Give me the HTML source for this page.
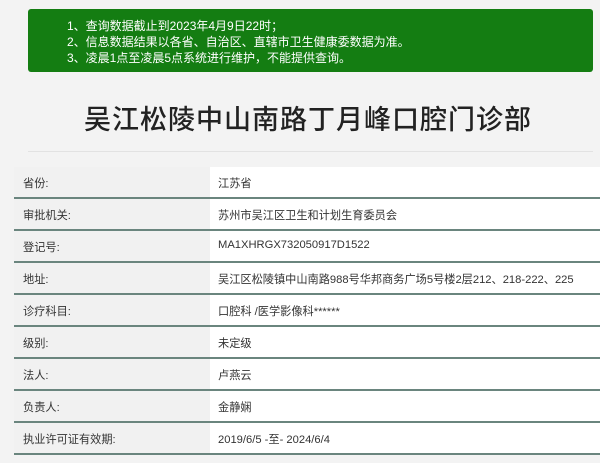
<!DOCTYPE html>
<html><head><meta charset="utf-8"><style>
html,body{margin:0;padding:0;width:600px;height:463px;overflow:hidden;background:#f3f3f3;font-family:"Liberation Sans","Noto Sans CJK SC",sans-serif;}
.notice{position:absolute;left:28px;top:9px;width:565px;height:63px;background:#147d12;border-radius:3px;color:#fff;font-size:12px;}
.notice div{position:absolute;left:39px;}
.title{position:absolute;left:4px;width:608px;top:103px;text-align:center;font-size:27px;color:#222;letter-spacing:1px;line-height:34px;font-weight:500;}
.hr{position:absolute;left:28px;width:565px;top:151px;height:1px;background:#e2e2e2;}
.tbl{position:absolute;left:14px;top:167px;width:586px;}
.row{height:30px;border-bottom:2px solid #6a857e;position:relative;font-size:11.2px;color:#333;}
.row .l{position:absolute;left:0;top:0;width:196px;height:30px;background:#f1f1f1;}
.row .l span{position:absolute;left:9px;top:8px;}
.row .v{position:absolute;left:196px;top:0;right:0;height:30px;background:#fff;}
.row .v span{position:absolute;left:8px;top:8px;}
</style></head><body>
<div class="notice">
<div style="top:8px">1、查询数据截止到2023年4月9日22时；</div>
<div style="top:24px">2、信息数据结果以各省、自治区、直辖市卫生健康委数据为准。</div>
<div style="top:40px">3、凌晨1点至凌晨5点系统进行维护，不能提供查询。</div>
</div>
<div class="title">吴江松陵中山南路丁月峰口腔门诊部</div>
<div class="hr"></div>
<div class="tbl">
<div class="row"><div class="l"><span>省份:</span></div><div class="v"><span>江苏省</span></div></div>
<div class="row"><div class="l"><span>审批机关:</span></div><div class="v"><span>苏州市吴江区卫生和计划生育委员会</span></div></div>
<div class="row"><div class="l"><span>登记号:</span></div><div class="v"><span>MA1XHRGX732050917D1522</span></div></div>
<div class="row"><div class="l"><span>地址:</span></div><div class="v"><span>吴江区松陵镇中山南路988号华邦商务广场5号楼2层212、218-222、225</span></div></div>
<div class="row"><div class="l"><span>诊疗科目:</span></div><div class="v"><span>口腔科 /医学影像科******</span></div></div>
<div class="row"><div class="l"><span>级别:</span></div><div class="v"><span>未定级</span></div></div>
<div class="row"><div class="l"><span>法人:</span></div><div class="v"><span>卢燕云</span></div></div>
<div class="row"><div class="l"><span>负责人:</span></div><div class="v"><span>金静娴</span></div></div>
<div class="row"><div class="l"><span>执业许可证有效期:</span></div><div class="v"><span>2019/6/5 -至- 2024/6/4</span></div></div>
</div>
</body></html>
